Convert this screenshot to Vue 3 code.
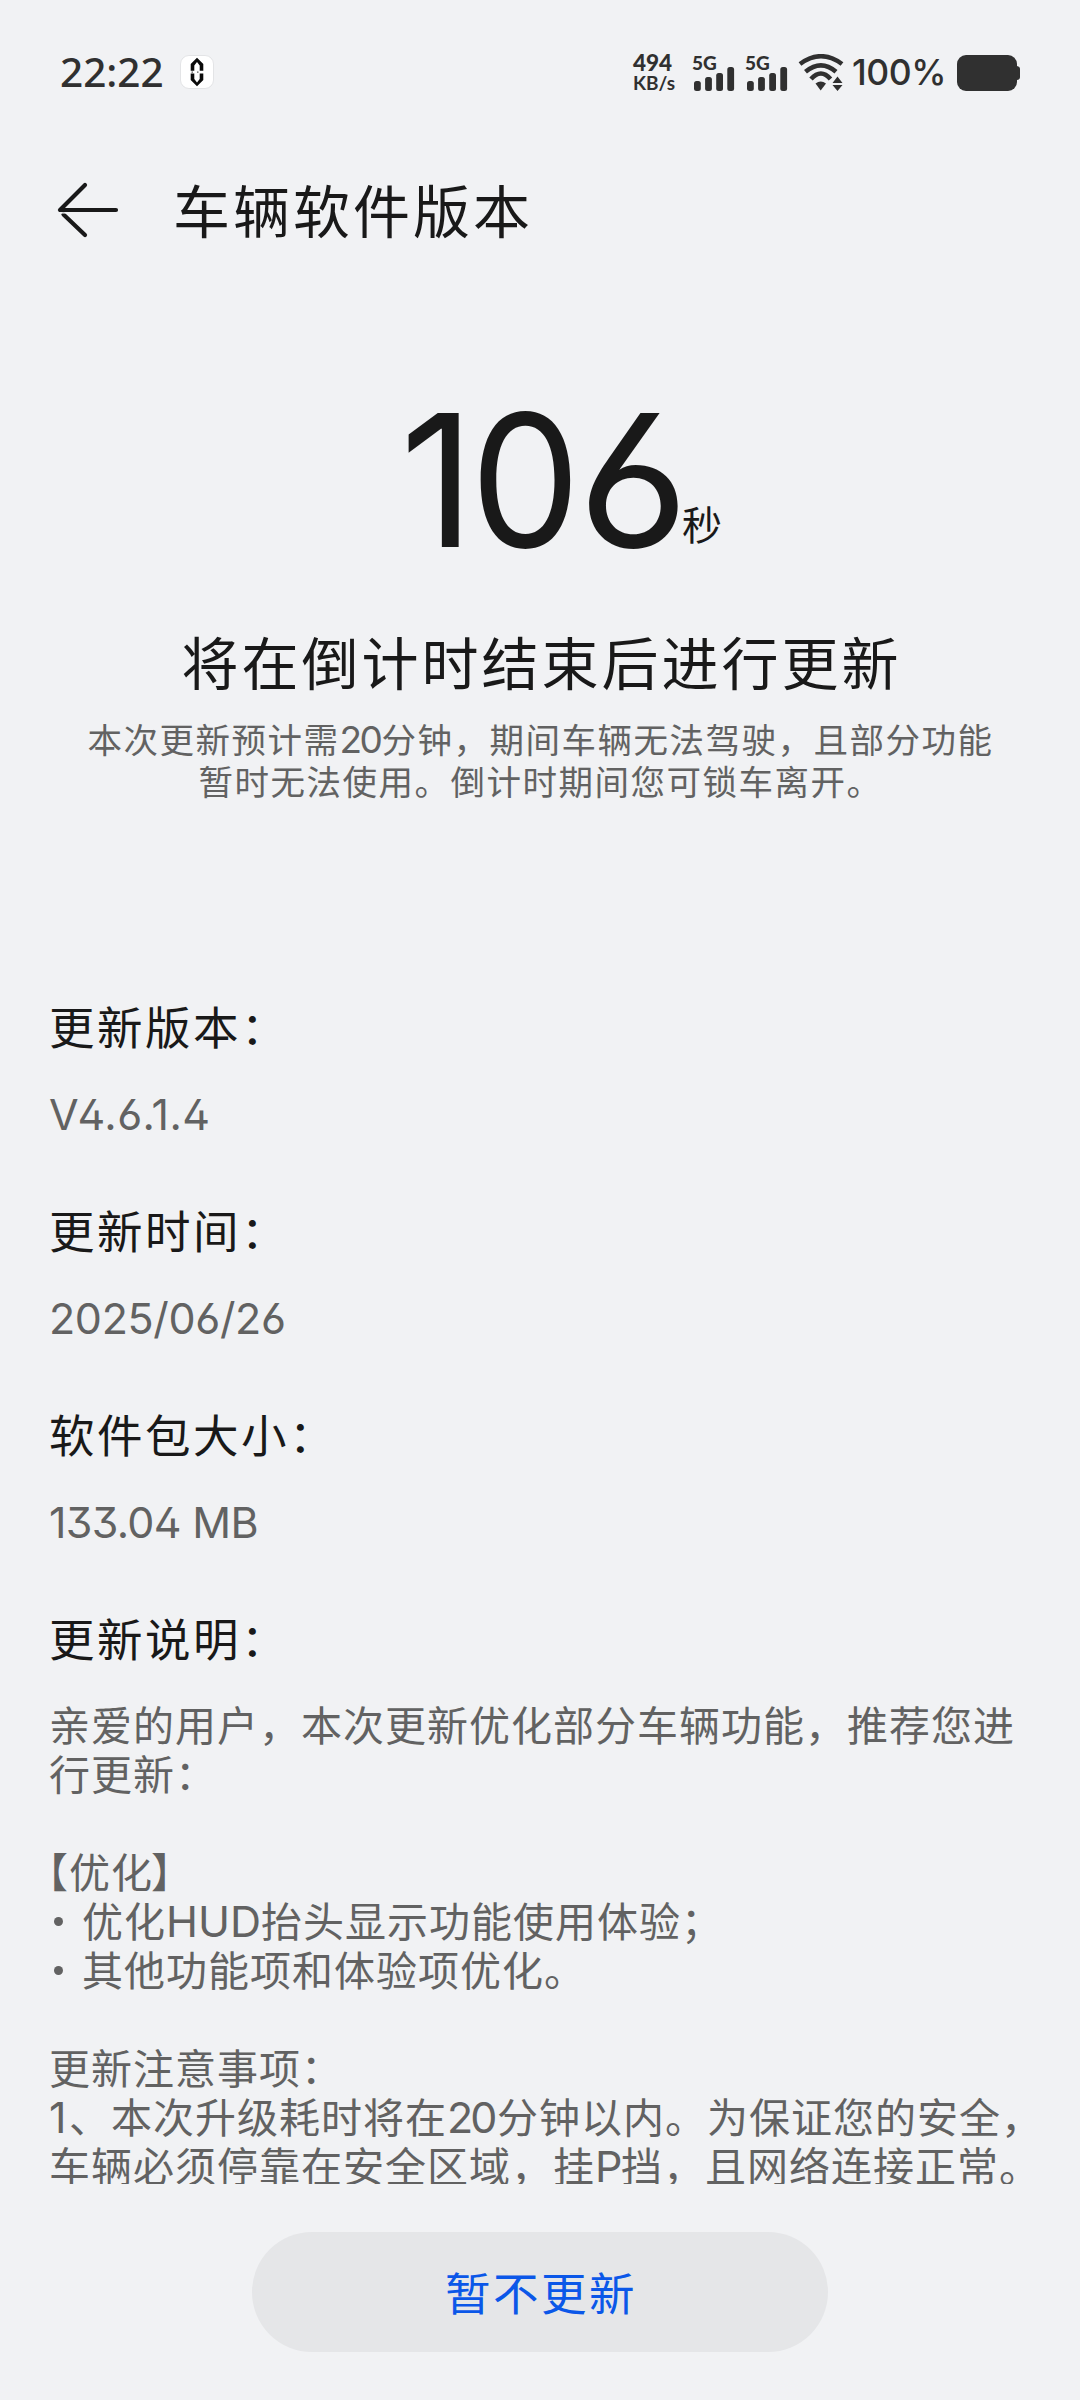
<script setup>
import { ref } from 'vue'

const seconds = ref('106')
const bars = [10, 14, 18, 24]
const sections = [
  { label: '更新版本：', value: 'V4.6.1.4', cls: 'version' },
  { label: '更新时间：', value: '2025/06/26', cls: 'date' },
  { label: '软件包大小：', value: '133.04 MB', cls: 'size' },
]
</script>

<template>
  <div class="screen">
    <header class="status">
      <span class="clock">22:22</span>
      <svg class="app-badge" width="34" height="34" viewBox="0 0 34 34">
        <rect x="0.5" y="0.5" width="33" height="33" rx="8.5" fill="#fff" stroke="#e3e4e6" />
        <path d="M17 2.800 L23.300 9 V15.800 H19.700 V10.500 L17 7 L14.300 10.500 V15.800 H10.700 V9 Z" fill="#0a0a0a" />
        <path d="M17 31.200 L23.300 25 V18.400 H19.700 V24 L17 27.400 L14.300 24 V18.400 H10.700 V25 Z" fill="#0a0a0a" />
        <path d="M11.500 17.100 H22.500" stroke="#333" stroke-width="1" stroke-dasharray="1.500 4" />
      </svg>
      <div class="speed"><span class="rate">494</span><span class="unit">KB/s</span></div>
      <div v-for="n in 2" :key="n" class="signal">
        <span class="net">5G</span>
        <svg width="41" height="24" viewBox="0 0 41 24">
          <rect v-for="(h, i) in bars" :key="i" :x="i * 11.1" :y="24 - h" width="6.800" :height="h" rx="2.500" fill="#303030" />
        </svg>
      </div>
      <svg class="wifi" width="46" height="38" viewBox="0 0 46 38">
        <g fill="none" stroke="#303030" stroke-width="4.600" stroke-linecap="butt">
          <path d="M2 10 Q23 -5.500 44 10" />
          <path d="M7.500 17.800 Q23 5 38 17.800" />
          <path d="M13 25 Q23 14 32.500 25" />
        </g>
        <path d="M17.500 29.500 Q22.700 25.500 28 29.500 L22.700 36.500 Z" fill="#303030" />
        <path d="M39.500 22.500 L44.500 29 H34.500 Z M34.500 31 H44.500 L39.500 37 Z" fill="#303030" />
      </svg>
      <span class="percent">100%</span>
      <svg class="battery" width="64" height="36" viewBox="0 0 64 36">
        <rect width="60" height="36" rx="9" fill="#303030" />
        <path d="M60 11 Q63 11.500 63 14 V22 Q63 24.500 60 25 Z" fill="#303030" />
      </svg>
    </header>

    <nav class="bar">
      <svg width="62" height="56" viewBox="0 0 62 56" fill="none" stroke="#191919" stroke-width="4.200" stroke-linecap="round">
        <path d="M28 3 L3 28 H59" stroke-linejoin="round" />
        <path d="M6.500 32.500 L28 53" />
        <path d="M1 30.900 H12" stroke="#f1f2f4" stroke-width="1.300" stroke-linecap="butt" />
      </svg>
      <h1>车辆软件版本</h1>
    </nav>

    <section class="count">
      <div class="number">
        <span v-for="(d, i) in seconds" :key="i" :class="'d' + d">{{ d }}</span>
        <span class="sec">秒</span>
      </div>
      <h2>将在倒计时结束后进行更新</h2>
      <p>本次更新预计需<i>20</i>分钟，期间车辆无法驾驶，且部分功能<br />暂时无法使用。倒计时期间您可锁车离开。</p>
    </section>

    <main class="details">
      <div v-for="s in sections" :key="s.label" class="item">
        <h3>{{ s.label }}</h3>
        <div class="value" :class="s.cls">{{ s.value }}</div>
      </div>
      <h3>更新说明：</h3>
      <div class="notes">
        <p>亲爱的用户，本次更新优化部分车辆功能，推荐您进<br />行更新：</p>
        <p class="gap"><span class="lead">【</span>优化<span class="tail">】</span></p>
        <p><b></b>优化<i class="hud">HUD</i>抬头显示功能使用体验；</p>
        <p><b></b>其他功能项和体验项优化。</p>
        <p class="gap">更新注意事项：</p>
        <p><i class="one">1</i>、本次升级耗时将在<i class="twenty">20</i>分钟以内。为保证您的安全，</p>
        <p>车辆必须停靠在安全区域，挂<i class="park">P</i>挡，且网络连接正常。</p>
      </div>
    </main>

    <footer><button>暂不更新</button></footer>
  </div>
</template>

<style>
body { background: #f1f2f4; }
</style>

<style scoped>
.screen {
  width: 1080px;
  height: 2400px;
  overflow: hidden;
  display: flex;
  flex-direction: column;
  background: #f1f2f4;
  color: #191919;
  font-family: "Noto Sans CJK SC", sans-serif;
}
h1, h2, h3, p { margin: 0; font-weight: 400; white-space: nowrap; }
i { display: inline-block; font-style: normal; line-height: 1; font-family: Inter, sans-serif; font-feature-settings: "ss01"; white-space: nowrap; }

.status { height: 146px; flex: none; box-sizing: border-box; padding: 54px 59px 0 60px; display: flex; align-items: flex-start; color: #303030; }
.clock { width: 120px; font: 550 40.500px/36px "Noto Sans", sans-serif; white-space: nowrap; }
.app-badge { margin-top: 1px; }
.speed { width: 59px; margin-left: 419px; display: flex; flex-direction: column; font-family: Lato, sans-serif; font-weight: 900; white-space: nowrap; }
.rate { font-size: 22.500px; line-height: 18px; }
.unit { font-size: 19px; line-height: 20px; margin-top: 1px; font-weight: 700; }
.signal { width: 53px; height: 37px; position: relative; display: flex; align-items: flex-end; }
.signal svg { margin-left: 2px; }
.net { position: absolute; left: 0; top: 0; font: 900 19px/17px Lato, sans-serif; }
.wifi { margin: 0; }
.percent { width: 105px; margin-left: 8px; font: 500 35.500px/38px Inter, sans-serif; letter-spacing: -0.400px; white-space: nowrap; }
.battery { margin-top: 1px; flex: none; }

.bar { height: 130px; flex: none; display: flex; align-items: center; padding-left: 57px; }
.bar svg { margin-bottom: 2px; }
.bar h1 { margin: 0 0 6px 54px; font-size: 57px; letter-spacing: 3px; line-height: 80px; }

.count { margin-top: 104px; display: flex; flex-direction: column; align-items: center; }
.number { display: flex; align-items: baseline; height: 200px; width: 360px; margin-left: 80px; font: 400 184px/200px Inter, sans-serif; font-feature-settings: "ss01"; }
.d1 { width: 70px; }
.d0 { width: 108px; transform: scaleX(0.95); transform-origin: 6px 50%; }
.d6 { width: 104px; transform: scaleX(1.04); transform-origin: 6px 50%; }
.sec { position: relative; top: -7px; font: 400 40px/60px "Noto Sans CJK SC", sans-serif; }
.count h2 { margin-top: 40px; padding-left: 3px; font-size: 57px; line-height: 80px; letter-spacing: 3px; }
.count p { margin-top: 17px; padding-left: 1px; font-size: 34.500px; line-height: 42px; letter-spacing: 1.500px; color: #626262; text-align: center; }
.count i { width: 42px; font-size: 37px; letter-spacing: -2.500px; text-align: left; }

.details { height: 1204px; margin-top: 179px; overflow: hidden; padding-left: 49px; }
.item { height: 204px; }
h3 { font-size: 45.500px; line-height: 90px; letter-spacing: 2.500px; }
.value { font: 400 43px/88px Inter, sans-serif; font-feature-settings: "ss01"; color: #626262; white-space: nowrap; }
.version { letter-spacing: 0.400px; }
.date { letter-spacing: -0.350px; }
.size { letter-spacing: -0.700px; }
.notes { margin-top: 17px; font-size: 41px; line-height: 49px; letter-spacing: 1px; color: #626262; }
.gap { margin-top: 49px; }
.lead { margin-left: -22px; }
.tail { margin-left: -2px; }
.notes b { display: inline-block; width: 9px; height: 9px; margin: 0 19px 11px 5px; border-radius: 50%; background: #626262; }
.notes i { font-size: 43px; letter-spacing: 0; }
.hud { width: 95px; }
.one { width: 20px; }
.notes .twenty { width: 50px; letter-spacing: -3px; }
.park { width: 26px; }

footer { flex: none; display: flex; justify-content: center; margin-top: 48px; }
button { width: 576px; height: 120px; padding: 0 0 2px 2px; border: 0; border-radius: 60px; background: #e5e6e8; color: #0b57e8; font: 400 45.500px/118px "Noto Sans CJK SC", sans-serif; letter-spacing: 2.500px; }
</style>
